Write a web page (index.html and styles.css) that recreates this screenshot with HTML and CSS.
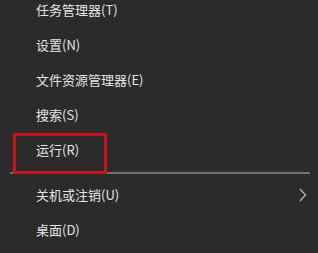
FILE: index.html
```html
<!DOCTYPE html>
<html lang="zh-CN">
<head>
  <meta charset="UTF-8">
  <meta name="viewport" content="width=device-width, initial-scale=1.0">
  <title>开始菜单 - 右键菜单</title>
  <link rel="stylesheet" href="styles.css">
</head>
<body>
  <ul class="menu">
    <li class="menu-item">任务管理器(T)</li>
    <li class="menu-item">设置(N)</li>
    <li class="menu-item">文件资源管理器(E)</li>
    <li class="menu-item">搜索(S)</li>
    <li class="menu-item marked">运行(R)</li>
    <li class="separator"></li>
    <li class="menu-item has-sub">
      <span>关机或注销(U)</span>
      <svg class="arrow" width="8" height="14" viewBox="0 0 8 14">
        <polyline points="1,1 6.5,7 1,13" fill="none" stroke="#b8b8b8" stroke-width="1.2"/>
      </svg>
    </li>
    <li class="menu-item">桌面(D)</li>
  </ul>
</body>
</html>
```

FILE: styles.css
```css
* {
  margin: 0;
  padding: 0;
  box-sizing: border-box;
}

body {
  background-color: #2b2b2b;
  color: #e4e4e4;
  font-family: "Noto Sans CJK SC", "Liberation Sans", sans-serif;
  font-size: 13px;
  overflow: hidden;
}

.menu {
  list-style: none;
  margin-top: -8px;
}

.menu-item {
  position: relative;
  height: 35px;
  line-height: 35px;
  padding-left: 36px;
  padding-right: 11px;
}

.has-sub {
  display: flex;
  align-items: center;
  justify-content: space-between;
}

.arrow {
  display: block;
}

/* 红框标注 */
.marked::after {
  content: "";
  position: absolute;
  left: 13px;
  top: 1px;
  width: 88px;
  height: 35px;
  border: 3px solid #c8141e;
}

.separator {
  height: 2px;
  margin: 5px 8px 3px 10px;
  background-color: #6e6e6e;
}
```
